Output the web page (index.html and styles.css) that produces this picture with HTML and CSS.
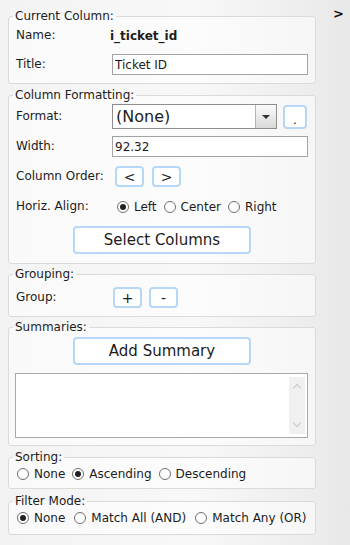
FILE: index.html
```html
<!DOCTYPE html>
<html lang="en">
<head>
    <meta charset="UTF-8">
    <meta name="viewport" content="width=device-width, initial-scale=1.0">
    <title>Column Properties</title>
    <link rel="stylesheet" href="styles.css">
</head>
<body>

<div class="page">
    <div class="panel">
        <fieldset class="group group-current">
            <legend>Current Column:</legend>
            <div class="row row-name">
                <span class="label">Name:</span>
                <span class="value">i_ticket_id</span>
            </div>
            <div class="row row-title">
                <span class="label">Title:</span>
                <input class="text" type="text" value="Ticket ID">
            </div>
        </fieldset>

        <fieldset class="group group-format">
            <legend>Column Formatting:</legend>
            <div class="row row-format">
                <span class="label">Format:</span>
                <div class="select">
                    <span class="select-value">(None)</span>
                    <span class="select-arrow"></span>
                </div>
                <button class="btn btn-dot">.</button>
            </div>
            <div class="row row-width">
                <span class="label">Width:</span>
                <input class="text" type="text" value="92.32">
            </div>
            <div class="row row-order">
                <span class="label">Column Order:</span>
                <button class="btn btn-sm btn-left">&lt;</button>
                <button class="btn btn-sm btn-right">&gt;</button>
            </div>
            <div class="row row-align">
                <span class="label">Horiz. Align:</span>
                <span class="opt opt-first"><span class="dot on"></span>Left</span>
                <span class="opt"><span class="dot"></span>Center</span>
                <span class="opt"><span class="dot"></span>Right</span>
            </div>
            <div class="row row-center row-select">
                <button class="btn btn-lg">Select Columns</button>
            </div>
        </fieldset>

        <fieldset class="group group-grouping">
            <legend>Grouping:</legend>
            <div class="row row-group">
                <span class="label">Group:</span>
                <button class="btn btn-sm btn-plus">+</button>
                <button class="btn btn-sm btn-minus">-</button>
            </div>
        </fieldset>

        <fieldset class="group group-summaries">
            <legend>Summaries:</legend>
            <div class="row row-center row-add">
                <button class="btn btn-lg btn-add">Add Summary</button>
            </div>
            <div class="listbox">
                <div class="scrollbar">
                    <span class="chev chev-up"></span>
                    <span class="chev chev-down"></span>
                </div>
            </div>
        </fieldset>

        <fieldset class="group group-sorting">
            <legend>Sorting:</legend>
            <div class="row row-radios">
                <span class="opt"><span class="dot"></span>None</span>
                <span class="opt"><span class="dot on"></span>Ascending</span>
                <span class="opt"><span class="dot"></span>Descending</span>
            </div>
        </fieldset>

        <fieldset class="group group-filter">
            <legend>Filter Mode:</legend>
            <div class="row row-radios row-wide">
                <span class="opt"><span class="dot on"></span>None</span>
                <span class="opt"><span class="dot"></span>Match All (AND)</span>
                <span class="opt"><span class="dot"></span>Match Any (OR)</span>
            </div>
        </fieldset>
    </div>

    <div class="toggle">&gt;</div>
</div>

</body>
</html>
```

FILE: styles.css
```css
html {
    height: 100%;
    background: linear-gradient(to right, #f3f3f3 0%, #f8f8f8 55%, #eeeeee 85%, #e8e8e8 100%);
}
body {
    margin: 0;
    font-family: "DejaVu Sans", Verdana, sans-serif;
    font-size: 12px;
    color: #1c1c1c;
}
.page {
    display: flex;
    align-items: flex-start;
}
.panel {
    width: 308px;
    margin-left: 8px;
    padding-top: 9px;
}
.toggle {
    margin-left: auto;
    margin-right: 6px;
    margin-top: 6px;
    font-size: 13px;
    font-weight: bold;
    color: #111;
}

/* group boxes */
.group {
    margin: 0 0 3px;
    padding: 0 7px 7px;
    border: 1px solid #dadada;
    border-radius: 3px;
    background: rgba(255, 255, 255, 0.5);
    min-width: 0;
}
.group legend {
    margin-left: -3px;
    padding: 0 2px;
    font-size: 12px;
    line-height: 14px;
}
.group-current {
    margin-bottom: 4px;
    padding-bottom: 8px;
}
.group-format {
    padding-bottom: 9px;
}
.group-grouping {
    padding-bottom: 8px;
}
.group-summaries {
    margin-bottom: 4px;
}
.group-sorting {
    padding-bottom: 6px;
    margin-bottom: 5px;
}
.group-filter {
    padding-bottom: 8px;
}

/* rows */
.row {
    display: flex;
    align-items: center;
    white-space: nowrap;
}
.label {
    width: 96px;
    flex: none;
    margin-top: -2px;
}
.value {
    font-weight: bold;
    margin-left: -2px;
}
.row-name {
    height: 20px;
    margin-top: 3px;
}
.row-title {
    height: 21px;
    margin-top: 8px;
}
.row-format {
    height: 25px;
    margin-top: 2px;
}
.row-width {
    height: 21px;
    margin-top: 7px;
}
.row-order {
    height: 21px;
    margin-top: 9px;
}
.row-align {
    height: 16px;
    margin-top: 12px;
}
.row-center {
    justify-content: center;
}
.row-select {
    margin-top: 11px;
}
.row-group {
    height: 21px;
    margin-top: 6px;
}
.row-add {
    margin-top: 3px;
}
.row-radios {
    height: 16px;
    margin-top: 2px;
    padding-left: 1px;
}
.row-wide .opt {
    margin-right: 9px;
}

/* inputs */
.text {
    box-sizing: border-box;
    width: 196px;
    height: 21px;
    margin: 0;
    padding: 0 2px;
    border: 1px solid #a3a3a3;
    background: #fff;
    font-family: "DejaVu Sans", Verdana, sans-serif;
    font-size: 12px;
    color: #1c1c1c;
    outline: none;
}
.select {
    box-sizing: border-box;
    width: 165px;
    height: 25px;
    display: flex;
    border: 1px solid #8e8e8e;
    background: #fff;
}
.select-value {
    flex: 1;
    padding-left: 3px;
    font-size: 16px;
    line-height: 23px;
}
.select-arrow {
    width: 20px;
    border-left: 1px solid #b4b4b4;
    background: linear-gradient(#fbfbfb, #d9d9d9);
    display: flex;
    align-items: center;
    justify-content: center;
}
.select-arrow::after {
    content: "";
    border-left: 4px solid transparent;
    border-right: 4px solid transparent;
    border-top: 4px solid #333;
}

/* buttons */
.btn {
    box-sizing: border-box;
    margin: 0;
    padding: 0;
    border: 2px solid #b6d7f7;
    border-radius: 4px;
    background: #fff;
    font-family: "DejaVu Sans", Verdana, sans-serif;
    color: #1c1c1c;
    cursor: pointer;
}
.btn-dot {
    width: 24px;
    height: 24px;
    margin-left: 6px;
    font-size: 12px;
    line-height: 26px;
}
.btn-sm {
    width: 29px;
    height: 21px;
    font-size: 14px;
    line-height: 16px;
}
.btn-left {
    margin-left: 3px;
}
.btn-right {
    margin-left: 8px;
}
.btn-plus {
    margin-left: 1px;
}
.btn-minus {
    margin-left: 7px;
}
.btn-lg {
    width: 178px;
    height: 28px;
    font-size: 15px;
}

/* radios */
.opt {
    display: flex;
    align-items: center;
    flex: none;
    margin-right: 7px;
}
.opt-first {
    margin-left: 5px;
}
.dot {
    box-sizing: border-box;
    width: 12px;
    height: 12px;
    margin-right: 5px;
    border: 1px solid #6f6f6f;
    border-radius: 50%;
    background: #fff;
    display: flex;
    align-items: center;
    justify-content: center;
}
.dot.on::after {
    content: "";
    width: 6px;
    height: 6px;
    border-radius: 50%;
    background: #222;
}

/* summary list */
.listbox {
    box-sizing: border-box;
    width: 293px;
    height: 65px;
    margin: 8px 0 0 -1px;
    padding: 3px 2px;
    border: 1px solid #a9a9a9;
    background: #fff;
    display: flex;
    justify-content: flex-end;
}
.scrollbar {
    width: 16px;
    background: #f0f0f0;
    display: flex;
    flex-direction: column;
    justify-content: space-between;
    align-items: center;
    padding: 6px 0;
}
.chev {
    width: 5px;
    height: 5px;
    border-left: 1px solid #c8c8c8;
    border-top: 1px solid #c8c8c8;
}
.chev-up {
    transform: rotate(45deg);
    margin-top: 2px;
}
.chev-down {
    transform: rotate(-135deg);
    margin-bottom: 2px;
}
```
